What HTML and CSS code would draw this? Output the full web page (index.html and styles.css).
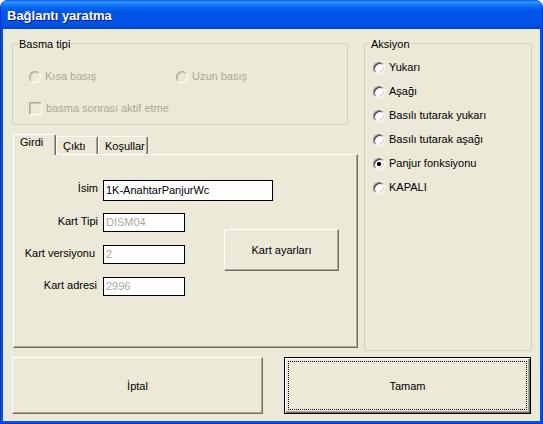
FILE: index.html
```html
<!DOCTYPE html>
<html lang="tr">
<head>
<meta charset="utf-8">
<title>Bağlantı yaratma</title>
<link rel="stylesheet" href="styles.css">
</head>
<body>
<div class="window">
  <div class="titlebar"><span class="title">Bağlantı yaratma</span></div>
  <div class="client">
    <div class="leftcol">
      <div class="group basma">
        <span class="legend">Basma tipi</span>
        <div class="basma-radios">
          <div class="opt disabled opt-kisa"><span class="radio"></span>Kısa basış</div>
          <div class="opt disabled"><span class="radio"></span>Uzun basış</div>
        </div>
        <div class="opt disabled opt-check"><span class="check"></span>basma sonrası aktif etme</div>
      </div>
      <div class="tabctl">
        <div class="tabstrip">
          <div class="tab sel t-girdi">Girdi</div>
          <div class="tab t-cikti">Çıktı</div>
          <div class="tab t-kosul">Koşullar</div>
        </div>
        <div class="panel">
          <div class="frow row-isim"><span class="flabel">İsim</span><span class="field field-wide">1K-AnahtarPanjurWc</span></div>
          <div class="lower">
            <div class="fcol">
              <div class="frow"><span class="flabel">Kart Tipi</span><span class="field disabled">DISM04</span></div>
              <div class="frow"><span class="flabel lbl-vers">Kart versiyonu</span><span class="field disabled">2</span></div>
              <div class="frow"><span class="flabel lbl-adr">Kart adresi</span><span class="field disabled">2996</span></div>
            </div>
            <div class="btn btn-kart">Kart ayarları</div>
          </div>
        </div>
      </div>
    </div>
    <div class="group aksiyon">
      <span class="legend">Aksiyon</span>
      <div class="aks-list">
        <div class="opt"><span class="radio"></span>Yukarı</div>
        <div class="opt"><span class="radio"></span>Aşağı</div>
        <div class="opt"><span class="radio"></span>Basılı tutarak yukarı</div>
        <div class="opt"><span class="radio"></span>Basılı tutarak aşağı</div>
        <div class="opt"><span class="radio on"></span>Panjur fonksiyonu</div>
        <div class="opt"><span class="radio"></span>KAPALI</div>
      </div>
    </div>
    <div class="buttons">
      <div class="btn btn-iptal">İptal</div>
      <div class="btn btn-tamam"><span class="focus">Tamam</span></div>
    </div>
  </div>
</div>
</body>
</html>
```
FILE: styles.css
```css
* { box-sizing: border-box; }
html, body { margin: 0; padding: 0; background: #fff; }
body {
  font-family: "Liberation Sans", Arial, sans-serif;
  font-size: 11px;
  color: #000;
}

.window {
  width: 543px;
  height: 424px;
  display: flex;
  flex-direction: column;
  background: #0055e5;
  border: 1px solid #0831d9;
  border-top: 0;
  border-radius: 8px 8px 0 0;
  overflow: hidden;
}

.titlebar {
  height: 29px;
  flex: none;
  padding: 8px 0 0 6px;
  background: linear-gradient(#0058ee 0px, #3a93ff 2px, #1a84ff 4px, #0669f4 7px, #0058e8 11px, #0054e3 16px, #0055e8 22px, #0050e0 26px, #0044d4 29px);
}
.title {
  font-weight: bold;
  font-size: 13px;
  line-height: 16px;
  color: #fff;
  text-shadow: 1px 1px 0 #0a1883;
}

.client {
  flex: 1;
  margin: 0 2px 2px;
  background: #ece9d8;
  display: grid;
  grid-template-columns: 346px 168px;
  grid-template-rows: 308px 57px;
  column-gap: 6px;
  row-gap: 6px;
  padding: 14px 0 0 9px;
}

.leftcol { display: flex; flex-direction: column; }

.group {
  position: relative;
  border: 1px solid #d0d0bf;
  border-radius: 3px;
}
.legend {
  position: absolute;
  top: -6px;
  left: 5px;
  padding: 0 1px;
  line-height: 13px;
  background: #ece9d8;
}

.basma { width: 336px; height: 82px; }
.basma-radios { display: flex; margin: 26px 0 0 16px; }
.opt { display: flex; align-items: center; height: 13px; line-height: 13px; white-space: nowrap; }
.opt.disabled { color: #aca899; }
.opt-kisa { width: 147px; }
.opt-check { margin: 19px 0 0 16px; }

.aks-list {
  display: flex;
  flex-direction: column;
  gap: 11px;
  padding: 17px 0 0 8px;
}

.radio {
  flex: none;
  width: 12px;
  height: 12px;
  margin-right: 4px;
  border-radius: 50%;
  background: #fff;
  border: 1px solid;
  border-color: #808080 #fff #fff #808080;
  box-shadow: inset 1px 1px 0 #404040, inset -1px -1px 0 #d4d0c8;
}
.radio.on { background: radial-gradient(circle, #000 0 1.8px, #fff 2.4px); }
.disabled .radio { background: #ece9d8; border-color: #aca899 #fff #fff #aca899; box-shadow: inset 1px 1px 0 #c8c5b5, inset -1px -1px 0 #ece9d8; }

.check {
  flex: none;
  width: 13px;
  height: 13px;
  margin-right: 4px;
  background: #ece9d8;
  border: 1px solid;
  border-color: #aca899 #fff #fff #aca899;
  box-shadow: inset 1px 1px 0 #c8c5b5;
}

.tabctl { margin: 9px 0 0 1px; width: 345px; }
.tabstrip {
  display: flex;
  align-items: flex-end;
  height: 20px;
  position: relative;
  z-index: 1;
}
.tab {
  height: 18px;
  padding: 1px 0 0 6px;
  line-height: 16px;
  border: 1px solid;
  border-bottom: 0;
  border-color: #fff #716f64 transparent #fff;
  border-radius: 2px 2px 0 0;
  box-shadow: inset -1px 0 0 #aca899;
  background: #ece9d8;
}
.tab.sel {
  height: 21px;
  margin-bottom: -1px;
  padding-top: 0;
  line-height: 14px;
}
.t-girdi { width: 43px; }
.t-cikti { width: 42px; }
.t-kosul { width: 50px; }

.panel {
  height: 194px;
  border: 1px solid;
  border-color: #fff #716f64 #716f64 #fff;
  box-shadow: inset -1px -1px 0 #aca899;
}

.frow { display: flex; align-items: flex-start; }
.flabel {
  width: 84px;
  text-align: right;
  line-height: 16px;
  white-space: nowrap;
}
.lbl-vers { padding-right: 3px; }
.lbl-adr { padding-right: 1px; }
.field {
  margin-left: 5px;
  width: 82px;
  height: 19px;
  border: 1px solid #000;
  background: #fff;
  padding-left: 2px;
  line-height: 17px;
  white-space: nowrap;
  overflow: hidden;
}
.field.disabled { color: #aca899; }
.row-isim { margin-top: 25px; }
.row-isim .flabel { line-height: 17px; }
.field-wide { width: 170px; height: 21px; line-height: 19px; }

.lower { display: flex; margin-top: 12px; align-items: flex-start; }
.fcol { display: flex; flex-direction: column; gap: 13px; }

.btn {
  display: flex;
  align-items: center;
  justify-content: center;
  background: #ece9d8;
  border: 1px solid;
  border-color: #fff #716f64 #716f64 #fff;
  box-shadow: inset -1px -1px 0 #aca899;
}
.btn-kart { width: 115px; height: 42px; margin: 16px 0 0 39px; }

.buttons {
  grid-column: 1 / -1;
  display: flex;
  gap: 21px;
}
.btn-iptal { width: 251px; }
.btn-tamam {
  width: 247px;
  border-color: #000;
  padding: 3px;
  box-shadow: inset 1px 1px 0 #fff, inset -1px -1px 0 #716f64, inset -2px -2px 0 #aca899;
}
.focus {
  flex: 1;
  align-self: stretch;
  display: flex;
  align-items: center;
  justify-content: center;
  border: 1px dotted #000;
}
```
